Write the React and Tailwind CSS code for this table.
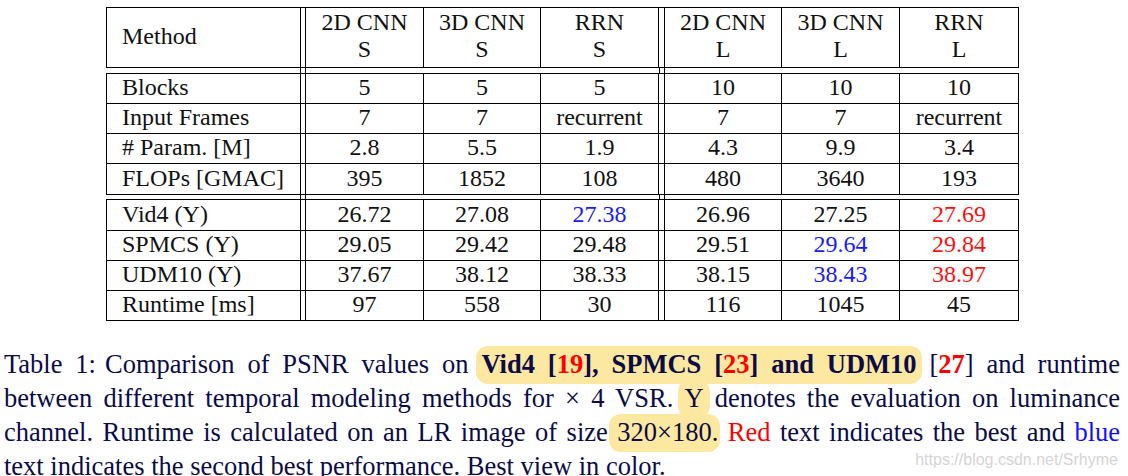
import React from "react";

const W = ["w-[194px]", "w-[5px]", "w-[118px]", "w-[117px]", "w-[118px]", "w-[6px]", "w-[117px]", "w-[118px]", "w-[119px]"];

function Row({ cells, h, header }) {
  const items = [cells[0], null, cells[1], cells[2], cells[3], null, cells[4], cells[5], cells[6]];
  return (
    <div className={`flex ${h} border-b border-black`}>
      {items.map((c, i) => {
        if (c === null) return <div key={i} className={`${W[i]} shrink-0 border-r border-black`} />;
        if (i === 0)
          return (
            <div key={i} className={`${W[i]} shrink-0 border-r border-black flex items-center pl-[15px] pb-[3px] whitespace-nowrap`}>
              {c}
            </div>
          );
        let content = c;
        let color = "";
        if (typeof c === "object" && c && c.v !== undefined) {
          content = c.v;
          color = c.c === "b" ? "text-[#1a1aff]" : "text-[#ff1010]";
        }
        return (
          <div key={i} className={`${W[i]} shrink-0 border-r border-black flex flex-col items-center justify-center pb-[3px] whitespace-nowrap ${header ? "leading-[27px]" : ""} ${color}`}>
            {Array.isArray(content) ? content.map((t, k) => <span key={k}>{t}</span>) : content}
          </div>
        );
      })}
    </div>
  );
}

function Gap({ h }) {
  return (
    <div className={`flex ${h} pl-[1px]`}>
      <div className="w-[194px] shrink-0 border-r border-black" />
      <div className="w-[5px] shrink-0 border-r border-black" />
      <div className="w-[353px] shrink-0" />
      <div className="w-[6px] shrink-0 border-l border-black border-r" />
    </div>
  );
}

const B = (v) => ({ v, c: "b" });
const Rd = (v) => ({ v, c: "r" });

function Hl({ children, bold, cls = "" }) {
  return (
    <span className={`bg-[#fce8a0] rounded-[12px] pt-[3px] pb-[5px] ${cls} ${bold ? "font-bold" : ""}`}>{children}</span>
  );
}

function Red({ children, bold }) {
  return <span className={`text-[#ff0000] ${bold ? "font-bold" : ""}`}>{children}</span>;
}

export default function App() {
  return (
    <div className="relative w-[1128px] h-[476px] overflow-hidden bg-white font-['Liberation_Serif',serif]">
      <div className="ml-[106px] pt-[7px] w-[913px] text-[24px] text-[#111] leading-none">
        <div className="border-l border-t border-black">
          <Row
            h="h-[60px]"
            header
            cells={["Method", ["2D CNN", "S"], ["3D CNN", "S"], ["RRN", "S"], ["2D CNN", "L"], ["3D CNN", "L"], ["RRN", "L"]]}
          />
        </div>
        <Gap h="h-[5px]" />
        <div className="border-l border-t border-black">
          <Row h="h-[30px]" cells={["Blocks", "5", "5", "5", "10", "10", "10"]} />
          <Row h="h-[30px]" cells={["Input Frames", "7", "7", "recurrent", "7", "7", "recurrent"]} />
          <Row h="h-[30px]" cells={["# Param. [M]", "2.8", "5.5", "1.9", "4.3", "9.9", "3.4"]} />
          <Row h="h-[31px]" cells={["FLOPs [GMAC]", "395", "1852", "108", "480", "3640", "193"]} />
        </div>
        <Gap h="h-[4px]" />
        <div className="border-l border-t border-black">
          <Row h="h-[31px]" cells={["Vid4 (Y)", "26.72", "27.08", B("27.38"), "26.96", "27.25", Rd("27.69")]} />
          <Row h="h-[30px]" cells={["SPMCS (Y)", "29.05", "29.42", "29.48", "29.51", B("29.64"), Rd("29.84")]} />
          <Row h="h-[30px]" cells={["UDM10 (Y)", "37.67", "38.12", "38.33", "38.15", B("38.43"), Rd("38.97")]} />
          <Row h="h-[30px]" cells={["Runtime [ms]", "97", "558", "30", "116", "1045", "45"]} />
        </div>
      </div>

      <div className="mt-[26px] ml-[4px] w-[1116px] text-[26.5px] leading-[34px] text-[#0b0b48]">
        <div className="text-justify [text-align-last:justify] whitespace-nowrap">
          Table 1:<span className="ml-[9px]">Comparison of PSNR values on </span>
          <Hl bold cls="px-[5px] -mx-[5px]">
            Vid4 [<Red>19</Red>], SPMCS [<Red>23</Red>] and UDM10
          </Hl>{" "}
          [<Red bold>27</Red>] and runtime
        </div>
        <div className="text-justify [text-align-last:justify] whitespace-nowrap">
          between different temporal modeling methods for × 4 VSR. <Hl cls="px-[6px] -mx-[6px]">Y</Hl> denotes the evaluation on luminance
        </div>
        <div className="text-justify [text-align-last:justify] whitespace-nowrap">
          channel. Runtime is calculated on an LR image of size <Hl cls="px-[8px] -mx-[8px]">320×180</Hl>. <Red>Red</Red> text indicates the best and{" "}
          <span className="text-[#1010ff]">blue</span>
        </div>
        <div className="whitespace-nowrap">text indicates the second best performance. Best view in color.</div>
      </div>

      <div className="absolute right-[10px] bottom-[4px] font-['Liberation_Sans',sans-serif] text-[16px] text-[#d4d4d4]">
        https://blog.csdn.net/Srhyme
      </div>
    </div>
  );
}
